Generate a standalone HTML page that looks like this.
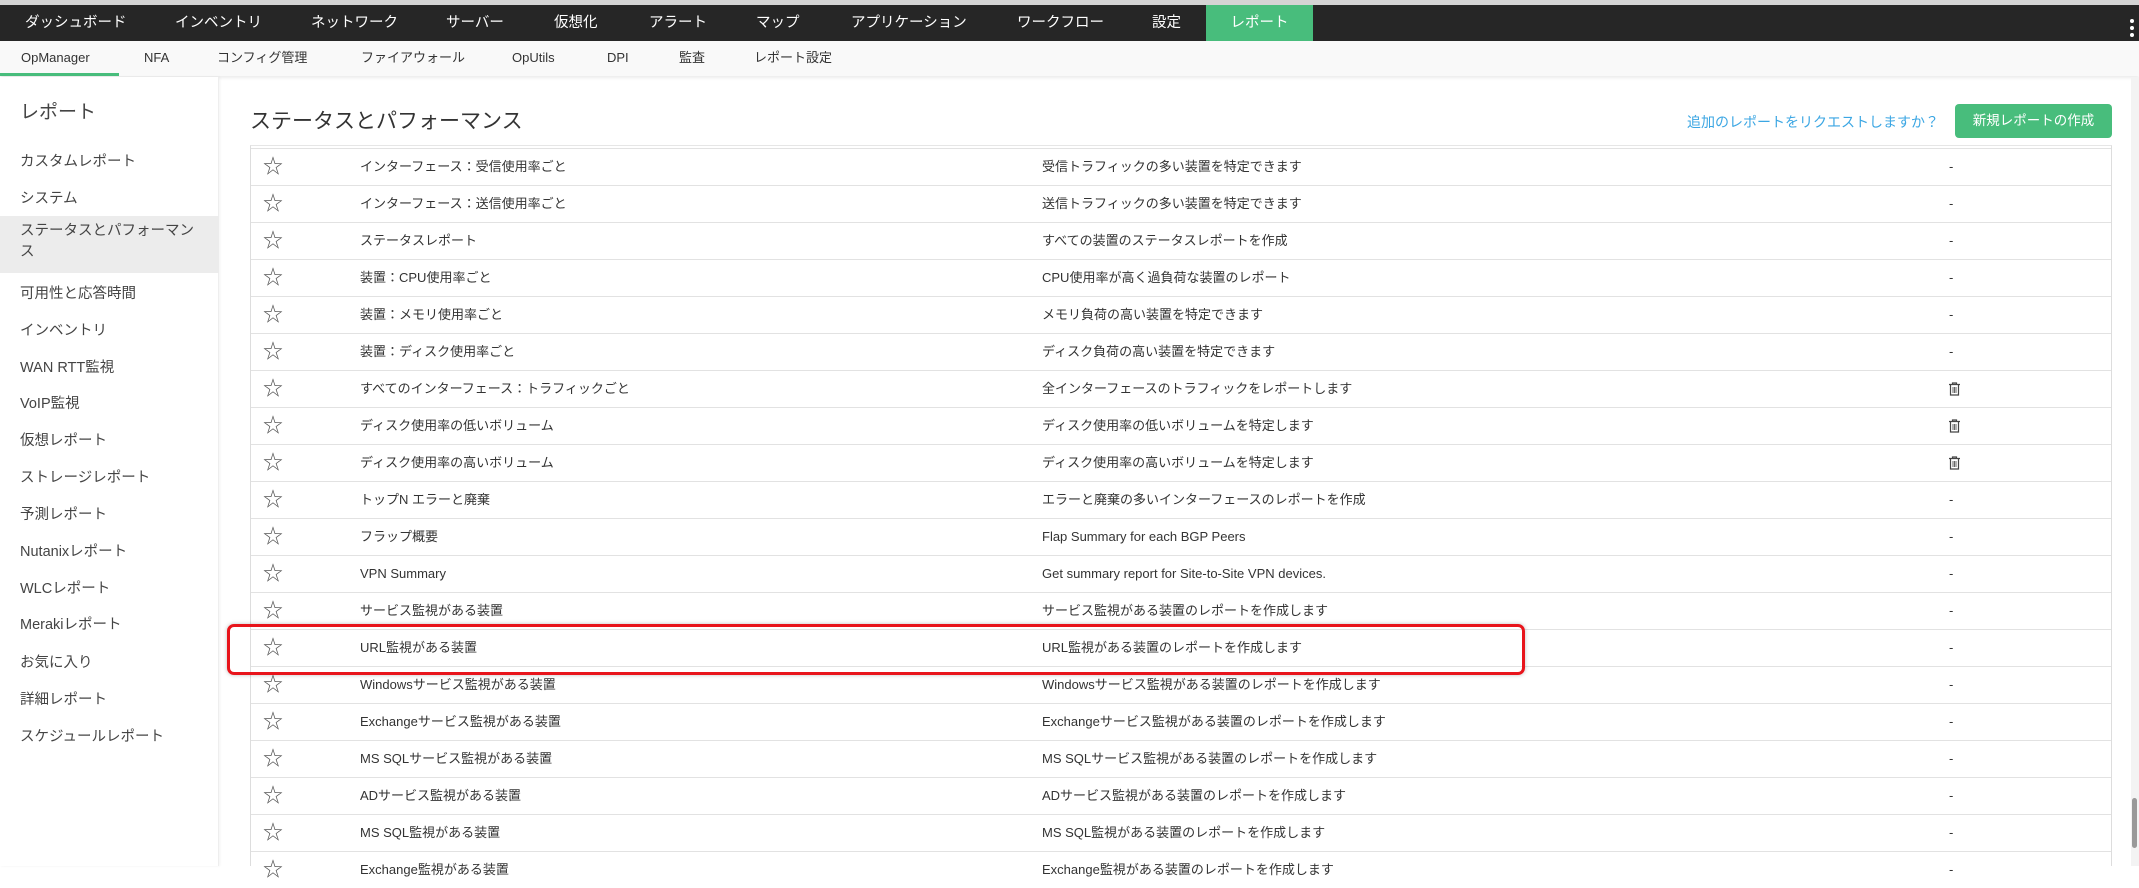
<!DOCTYPE html>
<html><head><meta charset="utf-8"><style>
*{margin:0;padding:0;box-sizing:border-box}
body{width:2139px;height:866px;overflow:hidden;background:#fff;font-family:"Liberation Sans","Noto Sans CJK JP",sans-serif;color:#333;position:relative}
.top{position:absolute;left:0;top:0;width:2139px;height:5px;background:#d4d4d4}
.nav{position:absolute;left:0;top:5px;width:2139px;height:36px;background:#262626}
.nav span{position:absolute;top:0;line-height:36px;color:#fff;font-size:14.5px}
.nav .act{background:#48bd7c;left:1206px;width:107px;text-align:center}
.sub{position:absolute;left:0;top:41px;width:2139px;height:35px;background:#f9f9f9;box-shadow:0 2px 3px rgba(0,0,0,.08)}
.sub span{position:absolute;top:0;line-height:34px;font-size:13px;color:#333}
.ul{position:absolute;left:0;top:73px;width:119px;height:3px;background:#48bd7c}
.side{position:absolute;left:0;top:77px;width:219px;height:789px;background:#fff;border-right:1px solid #eee;box-shadow:1px 0 3px rgba(0,0,0,.05)}
.side div{position:absolute;left:20px;font-size:14.5px;color:#444}
.sel{position:absolute;left:0;top:216px;width:219px;height:57px;background:#ececec}
h1{position:absolute;left:250px;top:105px;font-size:21px;font-weight:normal;color:#333}
.link{position:absolute;right:200px;top:112px;font-size:14px;color:#3ba6e3;white-space:nowrap}
.btn{position:absolute;left:1955px;top:104px;width:157px;height:34px;background:#48bd7c;border-radius:4px;color:#fff;font-size:13.5px;text-align:center;line-height:34px}
.tbl{position:absolute;left:250px;top:145px;width:1862px;height:721px;border-left:1px solid #ddd;border-right:1px solid #ddd;border-top:1px solid #e6e6e6}
.row{position:absolute;left:0;width:1860px;height:37px;border-top:1px solid #e2e2e2;font-size:13px}
.row span{position:absolute;top:0;line-height:36px;white-space:nowrap}
.st{left:12px;font-size:20px;color:#555}
.n{left:109px}.d{left:791px}.x{left:1698px}
.tr{position:absolute;left:1697px;top:11px}
.red{position:absolute;left:227px;top:624px;width:1298px;height:51px;border:3px solid #e8141b;border-radius:7px;box-shadow:0 0 4px rgba(0,0,0,.25)}
.sb{position:absolute;left:2131px;top:77px;width:8px;height:789px;background:#f3f3f3}
.th{position:absolute;left:2132px;top:798px;width:5px;height:50px;background:#999;border-radius:3px}
.dots{position:absolute;left:2130px;top:14px;width:4px}
.dots i{display:block;width:4px;height:4px;background:#fff;border-radius:2px;margin-bottom:3px}
</style></head><body>
<div class="top"></div>
<div class="nav">
<span style="left:25px">ダッシュボード</span><span style="left:175px">インベントリ</span><span style="left:311px">ネットワーク</span><span style="left:446px">サーバー</span><span style="left:554px">仮想化</span><span style="left:649px">アラート</span><span style="left:756px">マップ</span><span style="left:851px">アプリケーション</span><span style="left:1017px">ワークフロー</span><span style="left:1152px">設定</span><span class="act">レポート</span>
<div class="dots"><i></i><i></i><i></i></div>
</div>
<div class="sub">
<span style="left:21px">OpManager</span><span style="left:144px">NFA</span><span style="left:217px">コンフィグ管理</span><span style="left:361px">ファイアウォール</span><span style="left:512px">OpUtils</span><span style="left:607px">DPI</span><span style="left:679px">監査</span><span style="left:754px">レポート設定</span>
</div>
<div class="ul"></div>
<div class="side">
<div style="top:20px;font-size:19px">レポート</div>
<div class="sel" style="left:0;top:139px"></div>
<div style="top:73px">カスタムレポート</div>
<div style="top:110px">システム</div>
<div style="top:144px;line-height:21px;width:178px">ステータスとパフォーマンス</div>
<div style="top:205px">可用性と応答時間</div>
<div style="top:242px">インベントリ</div>
<div style="top:279px">WAN RTT監視</div>
<div style="top:315px">VoIP監視</div>
<div style="top:352px">仮想レポート</div>
<div style="top:389px">ストレージレポート</div>
<div style="top:426px">予測レポート</div>
<div style="top:463px">Nutanixレポート</div>
<div style="top:500px">WLCレポート</div>
<div style="top:536px">Merakiレポート</div>
<div style="top:574px">お気に入り</div>
<div style="top:611px">詳細レポート</div>
<div style="top:648px">スケジュールレポート</div>
</div>
<h1>ステータスとパフォーマンス</h1>
<div class="link">追加のレポートをリクエストしますか？</div>
<div class="btn">新規レポートの作成</div>
<div class="tbl" id="t"></div>
<div class="red"></div>
<div class="sb"></div><div class="th"></div>
<script>
var R=[["インターフェース：受信使用率ごと","受信トラフィックの多い装置を特定できます"],["インターフェース：送信使用率ごと","送信トラフィックの多い装置を特定できます"],["ステータスレポート","すべての装置のステータスレポートを作成"],["装置：CPU使用率ごと","CPU使用率が高く過負荷な装置のレポート"],["装置：メモリ使用率ごと","メモリ負荷の高い装置を特定できます"],["装置：ディスク使用率ごと","ディスク負荷の高い装置を特定できます"],["すべてのインターフェース：トラフィックごと","全インターフェースのトラフィックをレポートします",1],["ディスク使用率の低いボリューム","ディスク使用率の低いボリュームを特定します",1],["ディスク使用率の高いボリューム","ディスク使用率の高いボリュームを特定します",1],["トップN エラーと廃棄","エラーと廃棄の多いインターフェースのレポートを作成"],["フラップ概要","Flap Summary for each BGP Peers"],["VPN Summary","Get summary report for Site-to-Site VPN devices."],["サービス監視がある装置","サービス監視がある装置のレポートを作成します"],["URL監視がある装置","URL監視がある装置のレポートを作成します"],["Windowsサービス監視がある装置","Windowsサービス監視がある装置のレポートを作成します"],["Exchangeサービス監視がある装置","Exchangeサービス監視がある装置のレポートを作成します"],["MS SQLサービス監視がある装置","MS SQLサービス監視がある装置のレポートを作成します"],["ADサービス監視がある装置","ADサービス監視がある装置のレポートを作成します"],["MS SQL監視がある装置","MS SQL監視がある装置のレポートを作成します"],["Exchange監視がある装置","Exchange監視がある装置のレポートを作成します"]];
var tr='<svg class="tr" width="13" height="14" viewBox="0 0 13 14"><path d="M4.5 2V1h4v1M1 2.5h11M2.5 3v10h8V3" fill="none" stroke="#444" stroke-width="1.2"/><path d="M5 5v6M6.5 5v6M8 5v6" stroke="#666"/></svg>';
var h='';R.forEach(function(r,i){h+='<div class="row" style="top:'+(2+37*i)+'px"><span class="st">☆</span><span class="n">'+r[0]+'</span><span class="d">'+r[1]+'</span>'+(r[2]?tr:'<span class="x">-</span>')+'</div>'});
document.getElementById('t').innerHTML=h;
</script>
</body></html>
